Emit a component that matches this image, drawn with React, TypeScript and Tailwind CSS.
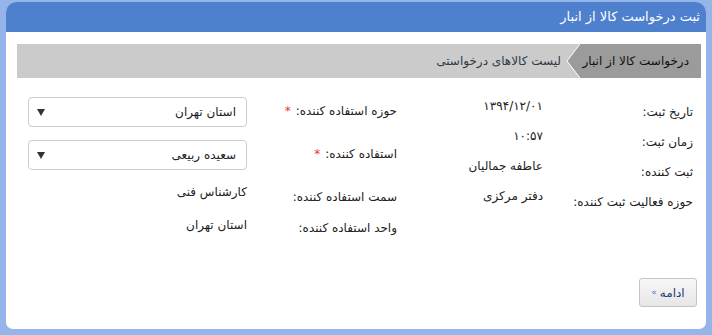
import React from 'react';

const font = { fontFamily: '"DejaVu Sans", "Noto Sans", sans-serif' };

const InfoRow = ({ label, value }: { label: string; value: string }) => (
  <div className="flex h-[30px] items-start">
    <div className="w-[150px] pt-[6px] leading-[18px]">{label}</div>
    <div className="w-[146px] leading-[18px]">{value}</div>
  </div>
);

const Select = ({ value }: { value: string }) => (
  <div className="flex h-[30px] w-[219px] items-center justify-between rounded-[4px] border border-[#cccccc] bg-white pr-[10px] pl-[8px]">
    <span className="leading-[18px]">{value}</span>
    <svg width="8" height="7" viewBox="0 0 8 7">
      <polygon points="0,0 8,0 4,7" fill="#333" />
    </svg>
  </div>
);

const Star = () => <span className="mr-[5px] text-[#e53935]">*</span>;

export default function App() {
  return (
    <div dir="rtl" style={font} className="h-[335px] w-[712px] bg-[#94b4ea] px-[6px] pt-[2px] pb-[6px] text-[12px] text-[#222]">
      <div className="flex h-full flex-col overflow-hidden rounded-t-[10px] rounded-b-[7px] bg-white">
        <div className="flex h-[30px] items-center bg-[#4f80cd] pr-[6px] text-[13px] text-white">
          ثبت درخواست کالا از انبار
        </div>

        <div className="mt-[12px] mr-[5px] ml-[11px] flex h-[34px] items-stretch bg-[#cbcbcb]">
          <div className="flex w-[121px] items-center bg-[#9b9b9b] pr-[12px] text-[#111]">
            درخواست کالا از انبار
          </div>
          <svg width="14" height="34" viewBox="0 0 14 34" className="shrink-0">
            <polygon points="14,0 1,17 14,34" fill="#9b9b9b" />
            <polyline points="14,0 1,17 14,34" fill="none" stroke="#ffffff" strokeWidth="1" />
          </svg>
          <div className="flex items-center pr-[5px] text-[#2f3a45]">لیست کالاهای درخواستی</div>
        </div>

        <div className="mt-[19px] flex pr-[13px]">
          <div className="flex flex-col">
            <InfoRow label="تاریخ ثبت:" value="۱۳۹۴/۱۲/۰۱" />
            <InfoRow label="زمان ثبت:" value="۱۰:۵۷" />
            <InfoRow label="ثبت کننده:" value="عاطفه جمالیان" />
            <InfoRow label="حوزه فعالیت ثبت کننده:" value="دفتر مرکزی" />
          </div>

          <div className="flex flex-col">
            <div className="mb-[13px] flex h-[30px] items-start">
              <div className="w-[150px] pt-[5px] leading-[18px]">
                حوزه استفاده کننده:<Star />
              </div>
              <Select value="استان تهران" />
            </div>
            <div className="mb-[13px] flex h-[30px] items-start">
              <div className="w-[150px] pt-[5px] leading-[18px]">
                استفاده کننده:<Star />
              </div>
              <Select value="سعیده ربیعی" />
            </div>
            <div className="flex h-[33px] items-start">
              <div className="w-[150px] pt-[5px] leading-[18px]">سمت استفاده کننده:</div>
              <div className="leading-[18px]">کارشناس فنی</div>
            </div>
            <div className="flex items-start">
              <div className="w-[150px] pt-[3px] leading-[18px]">واحد استفاده کننده:</div>
              <div className="leading-[18px]">استان تهران</div>
            </div>
          </div>
        </div>

        <div className="mt-auto flex pr-[9px] pb-[22px]">
          <button className="flex h-[29px] w-[58px] items-center justify-center gap-[3px] rounded-[3px] border border-[#c4c4c4] bg-gradient-to-b from-[#f7f7f7] to-[#e6e6e6] text-[#1d3c78]">
            <span>ادامه</span>
            <span className="text-[9px] text-[#4f80cd]">»</span>
          </button>
        </div>
      </div>
    </div>
  );
}
